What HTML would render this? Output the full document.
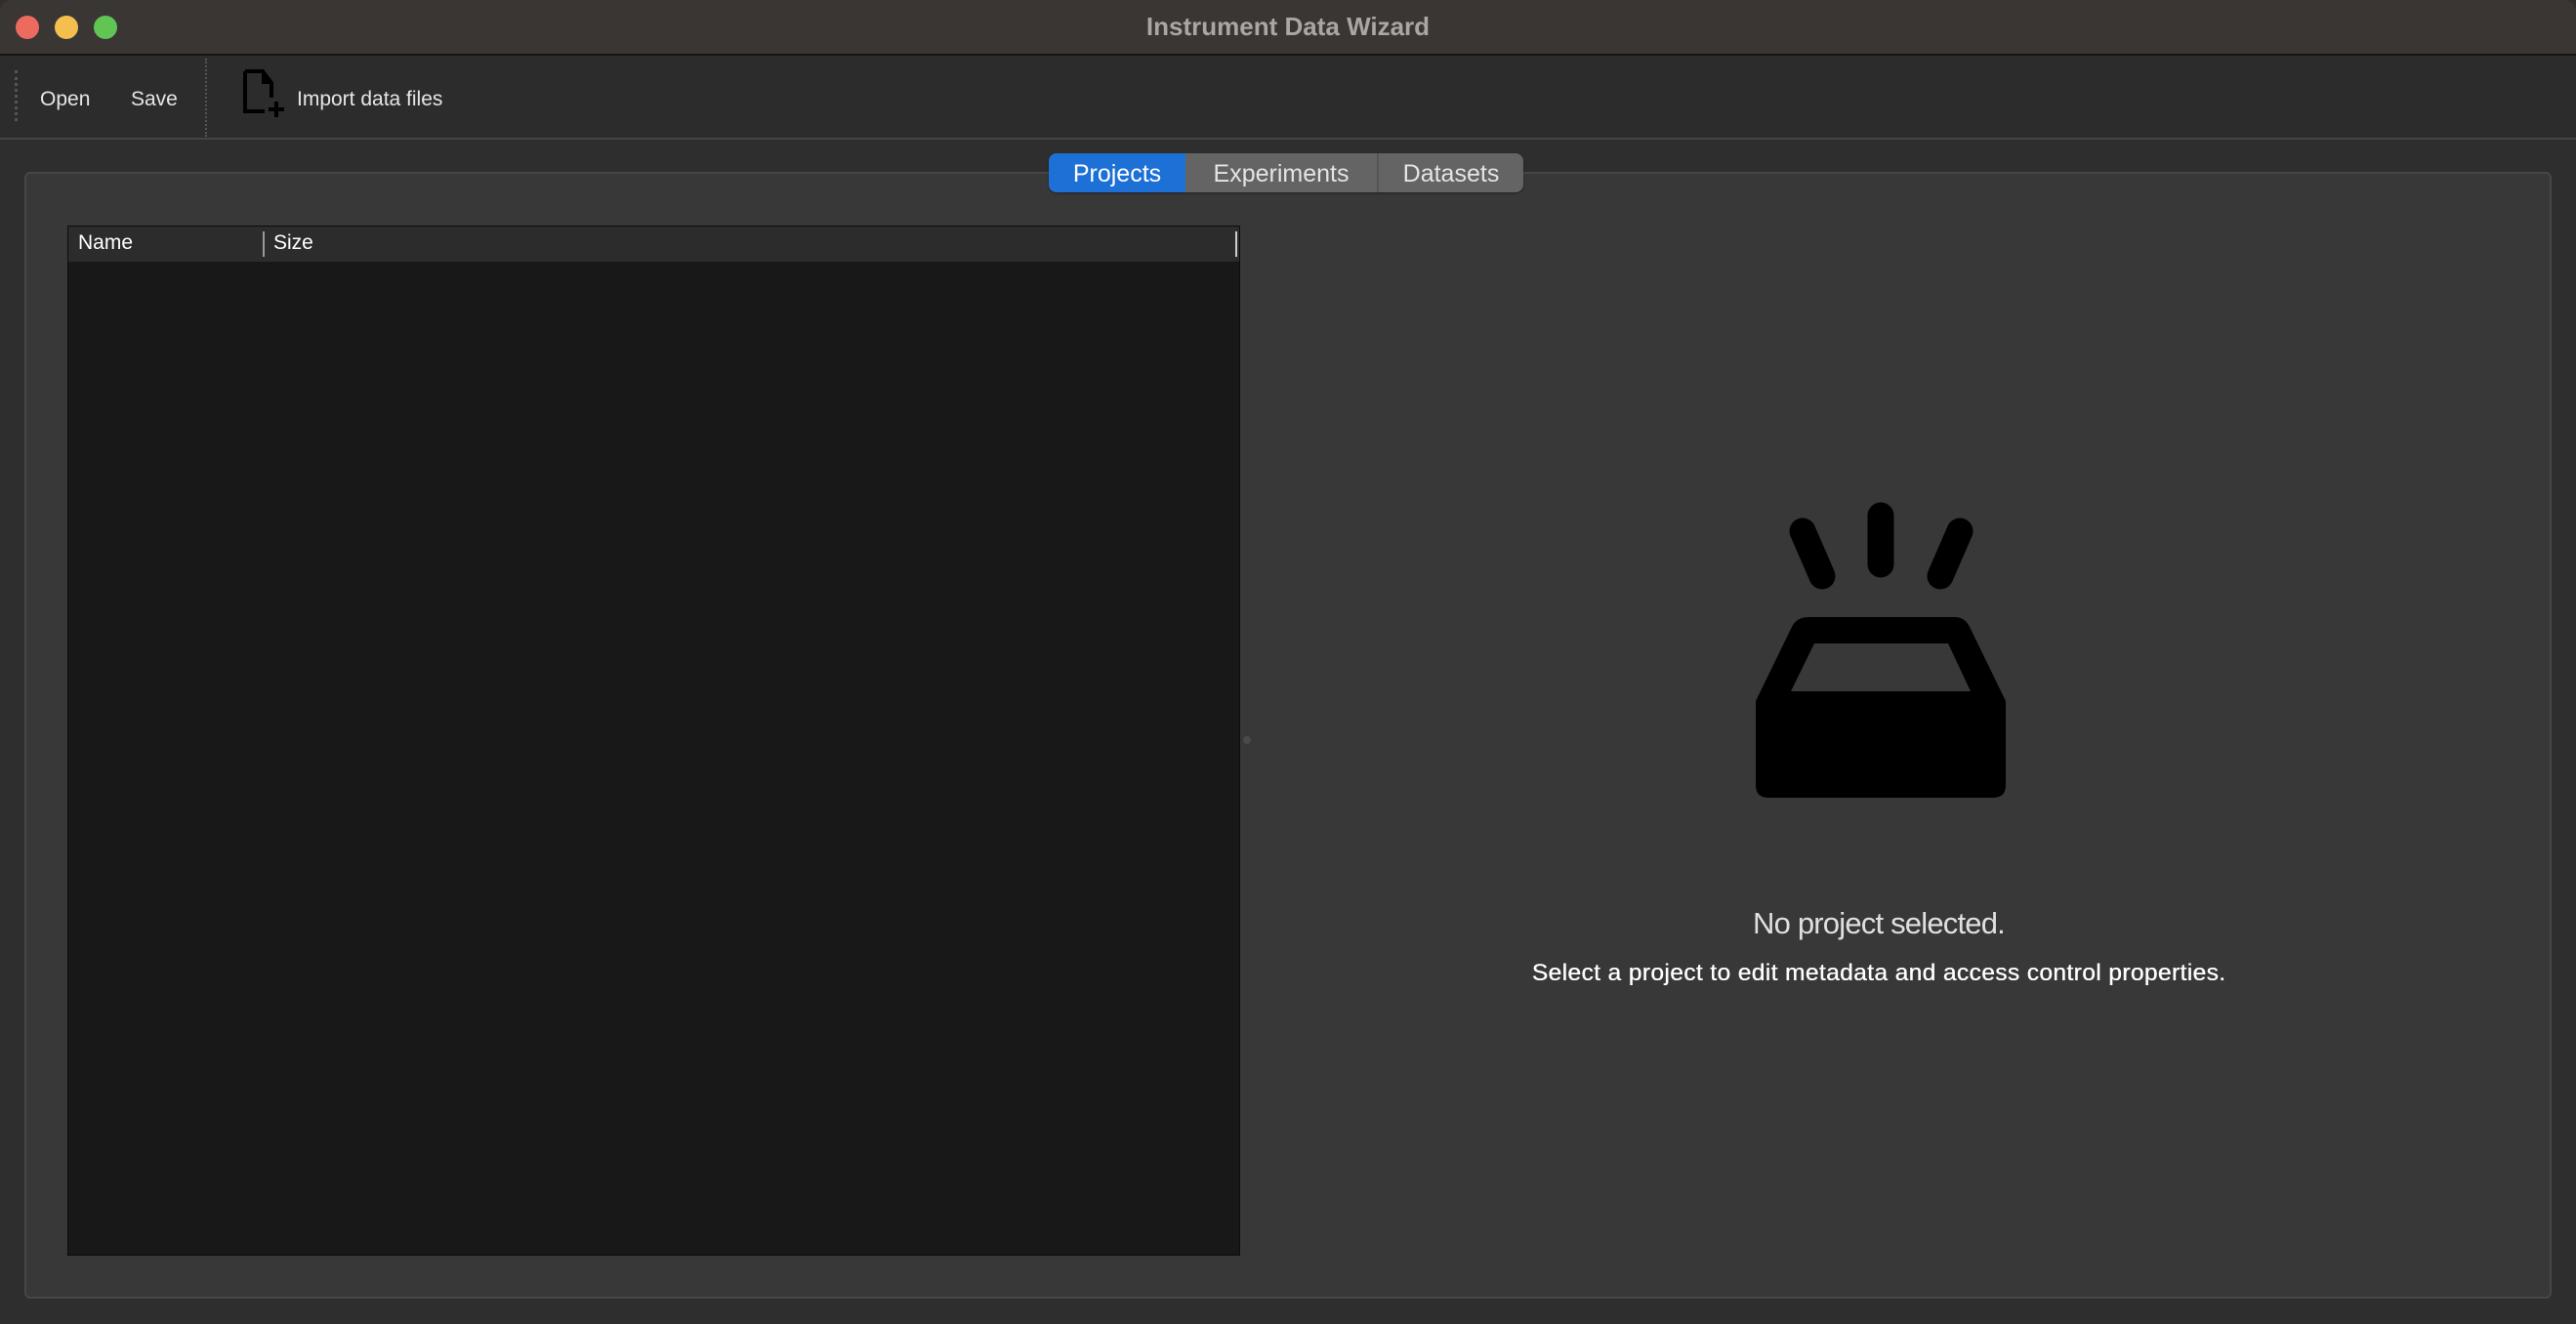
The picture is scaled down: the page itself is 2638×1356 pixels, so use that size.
<!DOCTYPE html>
<html><head><meta charset="utf-8"><style>
*{margin:0;padding:0;box-sizing:border-box}
body{width:2638px;height:1356px;background:#2e2e2e;font-family:"Liberation Sans",sans-serif;position:relative;overflow:hidden}
.abs{position:absolute}
</style></head><body>
<div class="abs" style="left:0;top:0;width:2638px;height:57px;background:#3a3634;border-bottom:2px solid #141414;border-radius:12px 12px 0 0"></div>
<div class="abs" style="left:16px;top:16px;width:24px;height:24px;border-radius:50%;background:#ec6a5e"></div>
<div class="abs" style="left:56px;top:16px;width:24px;height:24px;border-radius:50%;background:#f4bf4f"></div>
<div class="abs" style="left:96px;top:16px;width:24px;height:24px;border-radius:50%;background:#61c554"></div>
<div class="abs" style="left:0;top:12px;width:2638px;text-align:center;font-size:26px;font-weight:bold;color:#aaa6a3">Instrument Data Wizard</div>

<div class="abs" style="left:0;top:58px;width:2638px;height:85px;background:#2c2c2c;border-bottom:2px solid #444"></div>
<div class="abs" style="left:15px;top:72px;height:52px;border-left:3px dotted #555"></div>
<div class="abs" style="left:210px;top:60px;height:80px;border-left:2px dotted #555"></div>
<div class="abs" style="left:41px;top:90px;font-size:21px;color:#e6e6e6">Open</div>
<div class="abs" style="left:134px;top:90px;font-size:21px;color:#e6e6e6">Save</div>
<svg class="abs" style="left:247px;top:70px" width="48" height="52" viewBox="0 0 48 52">
<path d="M4 3 H22 L31 15 V30 M4 3 V44 H24" fill="none" stroke="#000" stroke-width="4"/>
<path d="M22 3 V15 H31" fill="#000" stroke="#000" stroke-width="2"/>
<path d="M36 34 V50 M28 42 H44" stroke="#000" stroke-width="4"/>
</svg>
<div class="abs" style="left:304px;top:90px;font-size:21px;color:#e6e6e6">Import data files</div>

<div class="abs" style="left:25px;top:176px;width:2588px;height:1154px;background:#383838;border:2px solid #474747;border-radius:6px"></div>

<div class="abs" style="left:1074px;top:157px;width:486px;height:40px;border-radius:8px;background:#646464;overflow:hidden;box-shadow:0 1px 2px rgba(0,0,0,.4)">
<div class="abs" style="left:0;top:0;width:140px;height:40px;background:#1c70d6"></div>
<div class="abs" style="left:336px;top:0;width:2px;height:40px;background:#555"></div>
<div class="abs" style="left:0;top:7px;width:140px;text-align:center;font-size:25px;color:#fff">Projects</div>
<div class="abs" style="left:140px;top:7px;width:196px;text-align:center;font-size:25px;color:#e4e4e4">Experiments</div>
<div class="abs" style="left:338px;top:7px;width:148px;text-align:center;font-size:25px;color:#e4e4e4">Datasets</div>
</div>

<div class="abs" style="left:69px;top:231px;width:1201px;height:1055px;background:#181818;border:1px solid #0c0c0c"></div>
<div class="abs" style="left:70px;top:232px;width:1199px;height:36px;background:#2c2c2c"></div>
<div class="abs" style="left:80px;top:237px;font-size:21px;color:#fff">Name</div>
<div class="abs" style="left:269px;top:237px;width:2px;height:26px;background:#999"></div>
<div class="abs" style="left:280px;top:237px;font-size:21px;color:#fff">Size</div>
<div class="abs" style="left:1265px;top:237px;width:2px;height:26px;background:#ccc"></div>
<div class="abs" style="left:1273px;top:754px;width:8px;height:8px;border-radius:50%;background:#4a4a4a"></div>

<svg class="abs" style="left:1790px;top:510px" width="270" height="315" viewBox="1790 510 270 315">
<g stroke="#000" stroke-width="27" stroke-linecap="round" fill="none">
<line x1="1926" y1="528" x2="1926" y2="578"/>
<line x1="1846" y1="544" x2="1866" y2="590"/>
<line x1="2007" y1="544" x2="1987" y2="590"/>
</g>
<path fill="#000" fill-rule="evenodd" d="M1852 632 H2002 Q2012 632 2017 642 L2054 718 V804 Q2054 817 2041 817 H1811 Q1798 817 1798 804 V718 L1835 642 Q1840 632 1852 632 Z M1858 659 L1834 708 H2018 L1995 659 Z"/>
</svg>

<div class="abs" style="left:1624px;top:928px;width:600px;text-align:center;font-size:31px;color:#e0e0e0;letter-spacing:-0.8px">No project selected.</div>
<div class="abs" style="left:1474px;top:983px;width:900px;text-align:center;font-size:24.5px;color:#fff;letter-spacing:0.4px;text-shadow:0.4px 0 0 #fff">Select a project to edit metadata and access control properties.</div>
</body></html>
